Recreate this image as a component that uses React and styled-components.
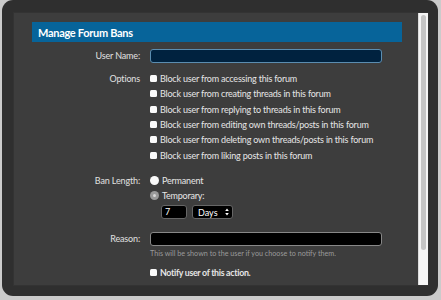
import React from "react";
import styled, { createGlobalStyle } from "styled-components";

const Global = createGlobalStyle`
  html, body { margin: 0; padding: 0; background: #cbcbcb; }
  body { width: 441px; height: 300px; overflow: hidden; font-family: Lato, "Liberation Sans", sans-serif; }
`;

const Frame = styled.div`
  margin: 0 3px 0 2px;
  height: 296px;
  box-sizing: border-box;
  background: #2f2f2f;
  border-radius: 11px;
  padding: 13px 10px 11px 12px;
  display: flex;
`;

const Panel = styled.div`
  flex: 1;
  display: flex;
  background: #3d3d3d;
  box-shadow: 0 0 0 1px #333;
  overflow: hidden;
`;

const Content = styled.div`
  flex: 1;
  padding: 9px 16px 0 18px;
`;

const Scrollbar = styled.div`
  width: 10px;
  background: #f6f6f6;
  border-left: 1px solid #ddd;
  box-sizing: border-box;
  padding: 2px 2px 0 2px;
`;

const Thumb = styled.div`
  height: 235px;
  background: #c5c5c5;
  border-radius: 3px;
`;

const Header = styled.h2`
  margin: 0;
  height: 20px;
  background: #07649a;
  color: #fff;
  font: bold 11px Lato, sans-serif;
  letter-spacing: -0.3px;
  display: flex;
  align-items: center;
  padding-left: 6px;
`;

const Row = styled.div`
  display: grid;
  grid-template-columns: 108px 1fr;
  column-gap: 10px;
  margin-top: ${p => p.$mt || 0}px;
`;

const Label = styled.div`
  text-align: right;
  color: #e0e0e0;
  font-size: 9px;
  letter-spacing: -0.15px;
  line-height: ${p => p.$lh || 15}px;
`;

const Controls = styled.div`
  display: flex;
  flex-direction: column;
`;

const TextInput = styled.div`
  height: 14px;
  box-sizing: border-box;
  background: ${p => p.$bg};
  border: 1px solid ${p => p.$border};
  border-radius: 3px;
  width: ${p => p.$w || "232px"};
  color: #fff;
  font-size: 9px;
  padding-left: 3px;
  line-height: 12px;
`;

const Option = styled.label`
  display: flex;
  align-items: center;
  gap: 3px;
  height: 15.3px;
  color: #e6e6e6;
  font-size: ${p => (p.$bold ? 8.8 : 9)}px;
  letter-spacing: ${p => (p.$bold ? -0.3 : -0.2)}px;
  font-weight: ${p => (p.$bold ? "bold" : "normal")};
`;

const Box = styled.span`
  width: 7px;
  height: 7px;
  background: #fafafa;
  border-radius: 1.5px;
  flex: none;
`;

const Radio = styled.span`
  width: 9px;
  height: 9px;
  border-radius: 50%;
  background: ${p => (p.$checked ? "#9a9a9a" : "#fafafa")};
  flex: none;
  display: flex;
  align-items: center;
  justify-content: center;
  &::after {
    content: "";
    width: 3px;
    height: 3px;
    border-radius: 50%;
    background: ${p => (p.$checked ? "#d8d8d8" : "transparent")};
  }
`;

const SubRow = styled.div`
  display: flex;
  gap: 5px;
  margin: 2px 0 0 11px;
`;

const Select = styled.div`
  width: 41px;
  height: 14px;
  box-sizing: border-box;
  background: #000;
  border: 1px solid #666;
  border-radius: 3px;
  color: #fff;
  font-size: 9px;
  display: flex;
  align-items: center;
  justify-content: space-between;
  padding: 0 3px 0 5px;
`;

const Hint = styled.div`
  color: #9a9a9a;
  font-size: 7.2px;
  margin-top: 3px;
`;

const options = [
  "Block user from accessing this forum",
  "Block user from creating threads in this forum",
  "Block user from replying to threads in this forum",
  "Block user from editing own threads/posts in this forum",
  "Block user from deleting own threads/posts in this forum",
  "Block user from liking posts in this forum",
];

export default function App() {
  return (
    <>
      <Global />
      <Frame>
        <Panel>
          <Content>
            <Header>Manage Forum Bans</Header>
            <Row $mt={7}>
              <Label $lh={14}>User Name:</Label>
              <TextInput $bg="#00223f" $border="#5b8db0" />
            </Row>
            <Row $mt={8}>
              <Label>Options</Label>
              <Controls>
                {options.map(o => (
                  <Option key={o}>
                    <Box />
                    {o}
                  </Option>
                ))}
              </Controls>
            </Row>
            <Row $mt={10}>
              <Label>Ban Length:</Label>
              <Controls>
                <Option>
                  <Radio />
                  Permanent
                </Option>
                <Option>
                  <Radio $checked />
                  Temporary:
                </Option>
                <SubRow>
                  <TextInput $bg="#000" $border="#666" $w="26px">7</TextInput>
                  <Select>
                    Days
                    <svg width="4" height="8" viewBox="0 0 4 8">
                      <path d="M2 0.5 L3.8 3 H0.2 Z M2 7.5 L3.8 5 H0.2 Z" fill="#fff" />
                    </svg>
                  </Select>
                </SubRow>
              </Controls>
            </Row>
            <Row $mt={13}>
              <Label $lh={14}>Reason:</Label>
              <Controls>
                <TextInput $bg="#000" $border="#888" />
                <Hint>This will be shown to the user if you choose to notify them.</Hint>
              </Controls>
            </Row>
            <Row $mt={6}>
              <div />
              <Option $bold>
                <Box />
                Notify user of this action.
              </Option>
            </Row>
          </Content>
          <Scrollbar>
            <Thumb />
          </Scrollbar>
        </Panel>
      </Frame>
    </>
  );
}
